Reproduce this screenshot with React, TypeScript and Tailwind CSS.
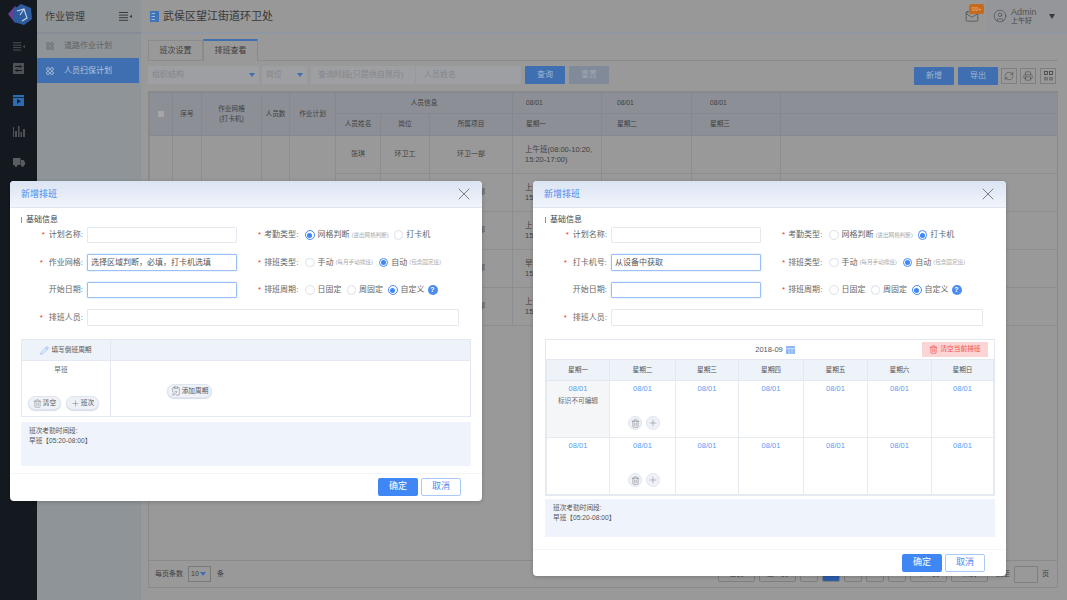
import { CircleUser, ClipboardPen, Mail, Pencil, Plus, Printer, RefreshCw, Trash2, X } from "lucide-react";
import type { ReactNode } from "react";

const FONT = { fontFamily: '"Liberation Sans", "Noto Sans CJK SC", sans-serif' };

function Logo() {
  return (
    <svg width="24" height="22" viewBox="0 0 24 22">
      <polygon points="7,2 0,10 7,19 13,10" fill="#6b3f90" />
      <polygon points="13,0 23,4 24,15 16,21 6,18 5,6" fill="#2c5c9f" />
      <path d="M9 7 L16 5 L19 14 L14 17 M16 5 L12 11" stroke="#ccd6e6" strokeWidth="1.1" fill="none" />
    </svg>
  );
}

function MenuArrow({ color, width = 13 }: { color: string; width?: number }) {
  return (
    <svg width={width} height="9" viewBox="0 0 13 9" fill={color}>
      <rect x="0" y="0" width="9" height="1" />
      <rect x="0" y="2.6" width="9" height="1" />
      <rect x="0" y="5.2" width="9" height="1" />
      <rect x="0" y="7.8" width="9" height="1" />
      <polygon points="10.5,4.4 13,2.8 13,6" />
    </svg>
  );
}

function Rail() {
  return (
    <aside className="w-[37px] shrink-0 bg-[#14191f] flex flex-col items-center">
      <div className="mt-[4px] ml-[3px] h-[22px]">
        <Logo />
      </div>
      <div className="mt-[16px] h-[9px]">
        <MenuArrow color="#4e5256" width={12} />
      </div>
      <svg className="mt-[12px]" width="11" height="11" viewBox="0 0 11 11">
        <rect width="11" height="11" fill="#4e5256" />
        <path d="M2 3.5H9M2 7.5H9" stroke="#14191f" />
        <rect x="6" y="2.5" width="1.6" height="2" fill="#14191f" />
        <rect x="3.4" y="6.5" width="1.6" height="2" fill="#14191f" />
      </svg>
      <svg className="mt-[21px]" width="11" height="11" viewBox="0 0 11 11">
        <rect width="11" height="11" fill="#2d6cb3" />
        <rect y="2" width="11" height="0.8" fill="#14191f" />
        <polygon points="4,4 8,6.3 4,8.8" fill="#14191f" />
      </svg>
      <svg className="mt-[20px]" width="12" height="11" viewBox="0 0 12 11" fill="#4e5256">
        <rect x="0" y="1" width="1" height="10" />
        <rect x="2" y="5" width="2" height="6" />
        <rect x="5" y="0" width="1.5" height="11" />
        <rect x="7.5" y="6" width="1.5" height="5" />
        <rect x="10" y="3" width="2" height="8" />
      </svg>
      <svg className="mt-[21px]" width="12" height="9" viewBox="0 0 12 9" fill="#5a5e62">
        <rect x="0" y="0" width="7.5" height="7" />
        <polygon points="8,2 10.5,2 12,4.2 12,7 8,7" />
        <circle cx="3" cy="7.5" r="1.4" />
        <circle cx="9.5" cy="7.5" r="1.4" />
      </svg>
    </aside>
  );
}

function DotsIcon({ color }: { color: string }) {
  return (
    <svg width="8" height="8" viewBox="0 0 8 8" fill="none" stroke={color} strokeWidth="0.8">
      <circle cx="2" cy="2" r="1.5" />
      <circle cx="6" cy="2" r="1.5" />
      <circle cx="2" cy="6" r="1.5" />
      <circle cx="6" cy="6" r="1.5" />
    </svg>
  );
}

function SideMenu() {
  return (
    <aside className="w-[104px] shrink-0 bg-[#8f9499] flex flex-col">
      <div className="h-[34px] flex items-center justify-between pl-[8px] pr-[9px] border-b-2 border-[#868c96]">
        <span className="text-[10px] text-[#3c3c3c]">作业管理</span>
        <MenuArrow color="#3c3c3c" />
      </div>
      <div className="h-[24px] flex items-center pl-[9px] gap-[10px] text-[8px] text-[#5f6266]">
        <DotsIcon color="#63676b" />
        <span>道路作业计划</span>
      </div>
      <div className="h-[25px] w-[102px] bg-[#3f6fb0] flex items-center pl-[9px] gap-[10px] text-[8px] text-[#b4c4dc]">
        <DotsIcon color="#b4c4dc" />
        <span>人员扫保计划</span>
      </div>
    </aside>
  );
}

function Header() {
  return (
    <header className="h-[34px] shrink-0 flex items-stretch border-b-2 border-[#8f97a4] bg-[#989898]">
      <div className="flex-1 flex items-center pl-[9px] gap-[4px]">
        <svg width="9" height="11" viewBox="0 0 9 11">
          <rect width="9" height="11" rx="0.5" fill="#3f74b8" />
          <rect x="1.5" y="2" width="3.5" height="1" fill="#a0b8d8" />
          <rect x="1.5" y="5" width="3.5" height="1" fill="#a0b8d8" />
          <rect x="1.5" y="8" width="3.5" height="1" fill="#a0b8d8" />
        </svg>
        <span className="text-[11px] text-[#363636]">武侯区望江街道环卫处</span>
      </div>
      <div className="relative w-[14px] mr-[8px] flex items-center text-[#3f3f3f]">
        <Mail size={15} strokeWidth={1.1} />
        <span className="absolute left-[4px] top-[4px] w-[15px] h-[10px] rounded-[2px] bg-[#c86a1e] text-[6px] leading-[10px] text-center text-[#e0b080]">
          99+
        </span>
      </div>
      <div className="w-[80px] bg-[#94969a] flex items-center pl-[6px] text-[#444]">
        <CircleUser size={14} strokeWidth={1} />
        <div className="ml-[4px] flex flex-col w-[38px]">
          <span className="text-[9px] leading-[10px] text-[#555]">Admin</span>
          <span className="text-[7px] leading-[8px]">上午好</span>
        </div>
        <span className="w-0 h-0 border-x-[3px] border-x-transparent border-t-[5px] border-t-[#3a3a3a]" />
      </div>
    </header>
  );
}

function Tabs() {
  return (
    <div className="h-[21px] mt-[6px] flex items-end border-b border-[#8b8b8b] mr-[9px]">
      <div className="w-[55px] h-[21px] mb-[-1px] border border-[#8b8b8b] flex items-center justify-center text-[8px] text-[#3d3d3d]">
        班次设置
      </div>
      <div className="w-[55px] h-[22px] mb-[-1px] border-t-2 border-[#3f6fb0] border-x border-x-[#8b8b8b] bg-[#999] flex items-center justify-center text-[8px] text-[#3d3d3d]">
        排班查看
      </div>
    </div>
  );
}

function Caret() {
  return <span className="w-0 h-0 border-x-[3px] border-x-transparent border-t-[4px] border-t-[#3f6fb0]" />;
}

function FilterField({ className, label, caret }: { className: string; label: string; caret?: boolean }) {
  return (
    <div className={`h-[18px] bg-[#9e9fa2] flex items-center justify-between px-[4px] text-[8px] text-[#84868a] ${className}`}>
      <span className="whitespace-nowrap">{label}</span>
      {caret && <Caret />}
    </div>
  );
}

function ToolIcon({ children, className = "" }: { children: ReactNode; className?: string }) {
  return (
    <div className={`w-[16px] h-[16px] border border-[#7f7f7f] flex items-center justify-center text-[#3f3f3f] ${className}`}>
      {children}
    </div>
  );
}

function Toolbar() {
  return (
    <div className="flex items-start h-[18px] mt-[5px] mr-[11px]">
      <FilterField className="w-[111px]" label="组织结构" caret />
      <FilterField className="w-[45px] ml-[3px]" label="岗位" caret />
      <FilterField className="w-[104px] ml-[4px] pl-[7px]" label="查询时段(只提供自然月)" />
      <FilterField className="w-[105px] ml-[1px] pl-[8px]" label="人员姓名" />
      <div className="w-[40px] h-[18px] ml-[4px] rounded-[1px] bg-[#3f6fb0] text-[#a3b5cf] text-[8px] flex items-center justify-center">查询</div>
      <div className="w-[40px] h-[18px] ml-[4px] rounded-[1px] bg-[#808a99] text-[#a0a6b0] text-[8px] flex items-center justify-center">重置</div>
      <div className="w-[40px] h-[18px] mt-[1px] ml-auto rounded-[1px] bg-[#3f6fb0] text-[#a3b5cf] text-[8px] flex items-center justify-center">新增</div>
      <div className="w-[40px] h-[18px] mt-[1px] ml-[4px] rounded-[1px] bg-[#3f6fb0] text-[#a3b5cf] text-[8px] flex items-center justify-center">导出</div>
      <ToolIcon className="ml-[3px] mt-[2px]">
        <RefreshCw size={10} strokeWidth={1.2} />
      </ToolIcon>
      <ToolIcon className="ml-[3px] mt-[2px]">
        <Printer size={10} strokeWidth={1.2} />
      </ToolIcon>
      <ToolIcon className="ml-[4px] mt-[2px]">
        <svg width="9" height="10" viewBox="0 0 9 10" fill="none" stroke="#3f3f3f" strokeWidth="0.8">
          <rect x="0.5" y="0.5" width="3" height="3" />
          <rect x="5.5" y="0.5" width="3" height="3" />
          <path d="M1 6V9.5M3 6V9.5M6 6V9.5M8 6V9.5" />
        </svg>
      </ToolIcon>
    </div>
  );
}

const bodyRows = [
  { name: "张琪", post: "环卫工", project: "环卫一部", shift: "上午班(08:00-10:20, 15:20-17:00)" },
  { name: "张琪", post: "环卫工", project: "环卫一部", shift: "上午班(08:00-10:20, 15:20-17:00)" },
  { name: "张琪", post: "环卫工", project: "环卫一部", shift: "上午班(08:00-10:20, 15:20-17:00)" },
  { name: "张琪", post: "环卫工", project: "环卫一部", shift: "早班(05:20-08:00) 15:20-17:00" },
  { name: "张琪", post: "环卫工", project: "环卫一部", shift: "上午班(08:00-10:20, 15:20-17:00)" },
];

const thClass = "border border-[#85888e] font-normal text-center";

function DataTable() {
  return (
    <table className="w-[909px] table-fixed border-collapse text-[6.7px] text-[#3f3f3f]">
      <colgroup>
        <col className="w-[23px]" />
        <col className="w-[29px]" />
        <col className="w-[60px]" />
        <col className="w-[28px]" />
        <col className="w-[46px]" />
        <col className="w-[45px]" />
        <col className="w-[49px]" />
        <col className="w-[83px]" />
        <col className="w-[89px]" />
        <col className="w-[90px]" />
        <col className="w-[89px]" />
        <col />
      </colgroup>
      <thead className="bg-[#8c8f96]">
        <tr className="h-[21px]">
          <th rowSpan={2} className={thClass}>
            <span className="inline-block w-[8px] h-[8px] rounded-[1px] bg-[#a6a6a6] border border-[#8f8f8f] align-middle" />
          </th>
          <th rowSpan={2} className={thClass}>序号</th>
          <th rowSpan={2} className={thClass}>
            作业网格
            <br />
            (打卡机)
          </th>
          <th rowSpan={2} className={thClass}>人员数</th>
          <th rowSpan={2} className={thClass}>作业计划</th>
          <th colSpan={3} className={thClass}>人员信息</th>
          <th className={`${thClass} text-left pl-[13px]`}>08/01</th>
          <th className={`${thClass} text-left pl-[15px]`}>08/01</th>
          <th className={`${thClass} text-left pl-[18px]`}>08/01</th>
          <th className={thClass} />
        </tr>
        <tr className="h-[22px]">
          <th className={thClass}>人员姓名</th>
          <th className={thClass}>岗位</th>
          <th className={thClass}>所属项目</th>
          <th className={`${thClass} text-left pl-[13px]`}>星期一</th>
          <th className={`${thClass} text-left pl-[15px]`}>星期二</th>
          <th className={`${thClass} text-left pl-[18px]`}>星期三</th>
          <th className={thClass} />
        </tr>
      </thead>
      <tbody className="text-[7px]">
        {bodyRows.map((row, i) => (
          <tr key={i} className="h-[38px]">
            {i === 0 && (
              <>
                <td rowSpan={5} className="border border-[#8b8d91]" />
                <td rowSpan={5} className="border border-[#8b8d91]" />
                <td rowSpan={5} className="border border-[#8b8d91]" />
                <td rowSpan={5} className="border border-[#8b8d91]" />
                <td rowSpan={5} className="border border-[#8b8d91]" />
              </>
            )}
            <td className="border border-[#8b8d91] text-center">{row.name}</td>
            <td className="border border-[#8b8d91] text-center">{row.post}</td>
            <td className="border border-[#8b8d91] text-center">{row.project}</td>
            <td className="border border-[#8b8d91] pl-[12px] pr-[6px] leading-[10px] text-[7.5px]">{row.shift}</td>
            <td className="border border-[#8b8d91]" />
            <td className="border border-[#8b8d91]" />
            <td className="border border-[#8b8d91]" />
          </tr>
        ))}
      </tbody>
    </table>
  );
}

function PageBtn({ className, children }: { className: string; children?: ReactNode }) {
  return (
    <div className={`h-[16px] rounded-[2px] border border-[#7f7f7f] flex items-center justify-center text-[7px] text-[#444] ${className}`}>
      {children}
    </div>
  );
}

function Pagination() {
  return (
    <div className="h-[27px] shrink-0 border-t border-[#8a8a8a] flex items-center pl-[6px] text-[7px] text-[#3f3f3f]">
      <span>每页条数</span>
      <div className="w-[23px] h-[16px] ml-[5px] border border-[#7a7a7a] flex items-center pl-[2px] gap-[1px] text-[7px]">
        10
        <Caret />
      </div>
      <span className="ml-[6px]">条</span>
      <div className="ml-auto flex items-center gap-[4px] pr-[8px]">
        <PageBtn className="w-[37px]">首页</PageBtn>
        <PageBtn className="w-[37px]">上一页</PageBtn>
        <PageBtn className="w-[18px]">1</PageBtn>
        <PageBtn className="w-[18px] bg-[#2c5ea6] border-[#2c5ea6]" />
        <PageBtn className="w-[18px]">3</PageBtn>
        <PageBtn className="w-[18px]">4</PageBtn>
        <PageBtn className="w-[18px]">5</PageBtn>
        <PageBtn className="w-[37px]">下一页</PageBtn>
        <PageBtn className="w-[37px]">末页</PageBtn>
        <span className="ml-[4px] whitespace-nowrap">跳至</span>
        <div className="w-[24px] h-[17px] rounded-[1px] border border-[#7f7f7f]" />
        <span>页</span>
      </div>
    </div>
  );
}

function Radio({ on, label, hint, className = "" }: { on?: boolean; label: string; hint?: string; className?: string }) {
  return (
    <div className={`flex items-center whitespace-nowrap ${className}`}>
      <span className={`w-[9.5px] h-[9.5px] rounded-full border flex items-center justify-center ${on ? "border-[#4a8cf0]" : "border-[#dcdfe6]"}`}>
        {on && <span className="w-[5px] h-[5px] rounded-full bg-[#3f87f5]" />}
      </span>
      <span className="ml-[3px] text-[8px] text-[#666]">{label}</span>
      {hint && <span className="ml-[2px] text-[5.6px] text-[#aaa]">{hint}</span>}
    </div>
  );
}

function Star() {
  return <span className="text-[8px] text-[#e8372c]">*</span>;
}

function Field({ label, star, starGap, focus, value, wide, className = "" }: { label: string; star?: boolean; starGap: string; focus?: boolean; value?: string; wide?: boolean; className?: string }) {
  return (
    <div className={`flex items-center ${className}`}>
      <div className="w-[62px] flex justify-end items-center whitespace-nowrap text-[8px] text-[#666]">
        {star && <span className={starGap}><Star /></span>}
        <span>{label}:</span>
      </div>
      <div className={`ml-[4px] h-full rounded-[1px] border flex items-center pl-[3px] text-[8px] text-[#555] ${wide ? "w-[372px]" : "w-[150px]"} ${focus ? "border-[#9cc0f5] shadow-[0_0_2px_#bcd4f8]" : "border-[#e4e8ef]"}`}>
        {value}
      </div>
    </div>
  );
}

function RightLabel({ label }: { label: string }) {
  return (
    <div className="w-[44px] ml-[21px] flex items-center gap-[3px] whitespace-nowrap text-[8px] text-[#666]">
      <Star />
      <span>{label}:</span>
    </div>
  );
}

function Help() {
  return <span className="ml-[3px] w-[10px] h-[10px] rounded-full bg-[#4a8cf0] text-white text-[7px] leading-[10px] text-center font-bold">?</span>;
}

function ModalShell({ className, children }: { className: string; children: ReactNode }) {
  return (
    <div className={`absolute z-10 flex flex-col bg-white rounded-[4px] shadow-[0_1px_4px_rgba(0,0,0,0.2)] ${className}`}>
      <div className="h-[27px] shrink-0 rounded-t-[4px] bg-gradient-to-b from-[#dbe4f3] to-[#f1f5fb] border-b border-[#dfe6f0] flex items-center justify-between pl-[11px] pr-[8px]">
        <span className="pt-[1px] text-[9px] text-[#4a8cf0]">新增排班</span>
        <X size={20} strokeWidth={0.8} className="text-[#444]" />
      </div>
      {children}
    </div>
  );
}

function Footer({ className }: { className: string }) {
  return (
    <div className={`mt-auto flex justify-end gap-[3px] pr-[21px] pt-[4px] border-t border-[#f4f5f7] ${className}`}>
      <div className="w-[40px] h-[18px] rounded-[2px] bg-[#3f87f5] text-white text-[9px] flex items-center justify-center">确定</div>
      <div className="w-[40px] h-[18px] rounded-[2px] border border-[#a9c9f8] text-[#4a8cf0] text-[9px] flex items-center justify-center">取消</div>
    </div>
  );
}

function FormBlock({ gridLabel, gridValue, punch, className }: { gridLabel: string; gridValue: string; punch?: boolean; className: string }) {
  return (
    <div className={className}>
      <div className="h-[19px] flex items-center text-[8px] text-[#444] mt-[2px]">
        <span className="w-[1px] h-[6px] bg-[#5b9bf5] mr-[4px]" />
        基础信息
      </div>
      <div className="h-[16px] flex items-center mt-[-2px] w-fit">
        <Field label="计划名称" star starGap="mr-[4px]" className="h-full" />
        <RightLabel label="考勤类型" />
        <Radio on={!punch} label="网格判断" hint="(进出网格判断)" className="ml-[3px]" />
        <Radio on={punch} label="打卡机" className="ml-[5px]" />
      </div>
      <div className="h-[17px] flex items-center mt-[11px]">
        <Field label={gridLabel} star starGap="mr-[6px]" focus value={gridValue} className="h-full" />
        <RightLabel label="排班类型" />
        <Radio label="手动" hint="(每月手动排班)" className="ml-[3px]" />
        <Radio on label="自动" hint="(包含固定班)" className="ml-[6px]" />
      </div>
      <div className="h-[16px] flex items-center mt-[11px]">
        <Field label="开始日期" starGap="" focus className="h-full" />
        <RightLabel label="排班周期" />
        <Radio label="日固定" className="ml-[3px]" />
        <Radio label="周固定" className="ml-[5px]" />
        <Radio on label="自定义" className="ml-[5px]" />
        <Help />
      </div>
      <div className="h-[17px] flex items-center mt-[11px]">
        <Field label="排班人员" star starGap="mr-[6px]" wide className="h-full" />
      </div>
    </div>
  );
}

function InfoBox({ className }: { className: string }) {
  return (
    <div className={`bg-[#eff3fb] pl-[8px] pt-[4px] text-[6.7px] leading-[10px] text-[#555] ${className}`}>
      <div>班次考勤时间段:</div>
      <div>早班【05:20-08:00】</div>
    </div>
  );
}

function PillBtn({ children, className }: { children: ReactNode; className: string }) {
  return (
    <div className={`h-[14px] rounded-full bg-[#eef1f7] border border-[#dfe5f0] shadow-[0_1px_1px_#d5dce8] flex items-center justify-center gap-[1px] text-[6.7px] text-[#555] ${className}`}>
      {children}
    </div>
  );
}

function LeftModal() {
  return (
    <ModalShell className="left-[10px] top-[181px] w-[472px] h-[320px]">
      <FormBlock className="pl-[11px]" gridLabel="作业网格" gridValue={"选择区域判断\uFF0C必填\uFF0C打卡机选填"} />
      <div className="mx-[11px] mt-[13px] h-[78px] border border-[#e3e8f1] grid grid-cols-[89px_1fr] grid-rows-[21px_1fr]">
        <div className="bg-[#eef2f9] border-r border-b border-[#e3e8f1] flex items-center justify-center gap-[2px] text-[6.7px] text-[#555]">
          <Pencil size={9} strokeWidth={1.2} className="text-[#4a8cf0]" />
          填写倒班周期
        </div>
        <div className="bg-[#eef2f9] border-b border-[#e3e8f1]" />
        <div className="relative border-r border-[#e3e8f1] flex flex-col items-center">
          <span className="mt-[4px] ml-[-10px] text-[6.7px] text-[#666]">早班</span>
          <div className="absolute left-[6px] top-[35px] flex gap-[5px]">
            <PillBtn className="w-[33px]">
              <Trash2 size={9} strokeWidth={1} />
              清空
            </PillBtn>
            <PillBtn className="w-[33px]">
              <Plus size={9} strokeWidth={1} />
              班次
            </PillBtn>
          </div>
        </div>
        <div className="pl-[56px] pt-[23px]">
          <PillBtn className="w-[45px]">
            <ClipboardPen size={10} strokeWidth={1} />
            添加周期
          </PillBtn>
        </div>
      </div>
      <InfoBox className="mx-[11px] mt-[5px] h-[44px]" />
      <Footer className="h-[28px]" />
    </ModalShell>
  );
}

const weekdays = ["星期一", "星期二", "星期三", "星期四", "星期五", "星期六", "星期日"];

function CalendarCell({ col, row }: { col: number; row: number }) {
  return (
    <td className={`relative border border-[#e6eaf1] align-top text-center pt-[3px] ${row === 0 && col === 0 ? "bg-[#f5f6f8]" : ""}`}>
      <div className="text-[7.5px] leading-[9px] text-[#5b9bf5]">08/01</div>
      {row === 0 && col === 0 && <div className="mt-[3px] text-[6.7px] text-[#666]">标识不可编辑</div>}
      {col === 1 && (
        <div className="absolute left-[18px] top-[35px] flex gap-[4px] text-[#666]">
          <span className="w-[14px] h-[14px] rounded-full bg-[#eef1f7] border border-[#dfe5f0] flex items-center justify-center">
            <Trash2 size={9} strokeWidth={1.2} />
          </span>
          <span className="w-[14px] h-[14px] rounded-full bg-[#eef1f7] border border-[#dfe5f0] flex items-center justify-center">
            <Plus size={10} strokeWidth={1} />
          </span>
        </div>
      )}
    </td>
  );
}

function RightModal() {
  return (
    <ModalShell className="left-[533px] top-[181px] w-[473px] h-[395px]">
      <FormBlock className="pl-[12px]" gridLabel="打卡机号" gridValue="从设备中获取" punch />
      <div className="ml-[12px] mr-[11px] mt-[13px] border border-[#e3e8f1]">
        <div className="relative h-[19px] pl-[10px] flex items-center justify-center gap-[3px] text-[7.5px] text-[#555]">
          <span>2018-09</span>
          <svg width="9" height="8" viewBox="0 0 9 8">
            <rect width="9" height="8" fill="#8db8f5" />
            <path d="M0 2.5H9M3 2.5V8M6 2.5V8" stroke="#e6f0fd" strokeWidth="0.6" />
          </svg>
          <div className="absolute right-[6px] top-[2px] w-[66px] h-[15px] bg-[#fbd5d5] flex items-center justify-center gap-[2px] text-[6.7px] text-[#f04b4b]">
            <Trash2 size={9} strokeWidth={1.8} />
            清空当前排班
          </div>
        </div>
        <table className="w-full table-fixed border-collapse">
          <colgroup>
            <col className="w-[63px]" />
            <col className="w-[66px]" />
            <col className="w-[63px]" />
            <col className="w-[65px]" />
            <col className="w-[64px]" />
            <col className="w-[64px]" />
            <col />
          </colgroup>
          <thead>
            <tr className="h-[21px] bg-[#eef2f9]">
              {weekdays.map((day) => (
                <th key={day} className="border border-[#e3e8f1] font-normal text-[6.7px] text-[#555]">
                  {day}
                </th>
              ))}
            </tr>
          </thead>
          <tbody>
            {[0, 1].map((row) => (
              <tr key={row} className="h-[57px]">
                {weekdays.map((day, col) => (
                  <CalendarCell key={day} col={col} row={row} />
                ))}
              </tr>
            ))}
          </tbody>
        </table>
      </div>
      <InfoBox className="ml-[12px] mr-[11px] mt-[3px] h-[38px]" />
      <Footer className="h-[27px]" />
    </ModalShell>
  );
}

export default function App() {
  return (
    <div className="relative w-[1067px] h-[600px] overflow-hidden flex bg-[#999]" style={FONT}>
      <Rail />
      <SideMenu />
      <main className="flex-1 min-w-0 flex flex-col">
        <Header />
        <div className="flex-1 min-h-0 flex flex-col pl-[7px] pb-[12px]">
          <Tabs />
          <Toolbar />
          <div className="flex-1 min-h-0 mt-[7px] mr-[9px] border border-[#8a8a8a] flex flex-col overflow-hidden">
            <div className="flex-1 min-h-0">
              <DataTable />
            </div>
            <Pagination />
          </div>
        </div>
      </main>
      <LeftModal />
      <RightModal />
    </div>
  );
}
